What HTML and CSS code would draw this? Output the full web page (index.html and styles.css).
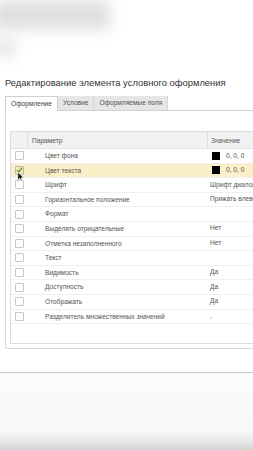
FILE: index.html
```html
<!DOCTYPE html>
<html lang="ru">
<head>
    <meta charset="UTF-8">
    <meta name="viewport" content="width=device-width, initial-scale=1.0">
    <title>Редактирование элемента условного оформления</title>
    <link rel="stylesheet" href="styles.css">
</head>
<body>
    <div class="page">
        <div class="topBlur">
            <div class="smudge"></div>
            <div class="smudgeSmall"></div>
        </div>

        <div class="title">Редактирование элемента условного оформления</div>

        <div class="tabs">
            <div class="tab active">Оформление</div>
            <div class="tab">Условие</div>
            <div class="tab">Оформляемые поля</div>
        </div>

        <div class="panel">
            <div class="grid">
                <div class="gridHead">
                    <div class="colCheck"></div>
                    <div class="colParam">Параметр</div>
                    <div class="colValue">Значение</div>
                </div>

                <div class="row">
                    <div class="colCheck"><span class="box"></span></div>
                    <div class="colParam indent">Цвет фона</div>
                    <div class="colValue"><span class="swatch"></span>0, 0, 0</div>
                </div>
                <div class="row current">
                    <div class="colCheck">
                        <span class="box checked">
                            <svg viewBox="0 0 10 10" width="8" height="8"><path d="M1.5 5.2 L4 7.6 L8.6 2" fill="none" stroke="#3a9a3a" stroke-width="1.8"/></svg>
                        </span>
                        <svg class="cursor" viewBox="0 0 10 14" width="8" height="12"><path d="M1 1 L1 11 L3.5 8.6 L5.3 12.6 L6.8 11.9 L5.1 8 L8.4 8 Z" fill="#111" stroke="#fff" stroke-width="0.8"/></svg>
                    </div>
                    <div class="colParam indent">Цвет текста</div>
                    <div class="colValue"><span class="swatch"></span>0, 0, 0</div>
                </div>
                <div class="row">
                    <div class="colCheck"><span class="box"></span></div>
                    <div class="colParam indent">Шрифт</div>
                    <div class="colValue">Шрифт диалогов</div>
                </div>
                <div class="row">
                    <div class="colCheck"><span class="box"></span></div>
                    <div class="colParam indent">Горизонтальное положение</div>
                    <div class="colValue">Прижать влево</div>
                </div>
                <div class="row">
                    <div class="colCheck"><span class="box"></span></div>
                    <div class="colParam indent">Формат</div>
                    <div class="colValue"></div>
                </div>
                <div class="row">
                    <div class="colCheck"><span class="box"></span></div>
                    <div class="colParam indent">Выделять отрицательные</div>
                    <div class="colValue">Нет</div>
                </div>
                <div class="row">
                    <div class="colCheck"><span class="box"></span></div>
                    <div class="colParam indent">Отметка незаполненного</div>
                    <div class="colValue">Нет</div>
                </div>
                <div class="row">
                    <div class="colCheck"><span class="box"></span></div>
                    <div class="colParam indent">Текст</div>
                    <div class="colValue"></div>
                </div>
                <div class="row">
                    <div class="colCheck"><span class="box"></span></div>
                    <div class="colParam indent">Видимость</div>
                    <div class="colValue">Да</div>
                </div>
                <div class="row">
                    <div class="colCheck"><span class="box"></span></div>
                    <div class="colParam indent">Доступность</div>
                    <div class="colValue">Да</div>
                </div>
                <div class="row">
                    <div class="colCheck"><span class="box"></span></div>
                    <div class="colParam indent">Отображать</div>
                    <div class="colValue">Да</div>
                </div>
                <div class="row">
                    <div class="colCheck"><span class="box"></span></div>
                    <div class="colParam indent">Разделитель множественных значений</div>
                    <div class="colValue">,</div>
                </div>
            </div>
        </div>

        <div class="bottomLine"></div>
        <div class="bottomArea"></div>
    </div>
</body>
</html>
```

FILE: styles.css
```css
body {
    margin: 0;
    background-color: #ffffff;
    font-family: 'Liberation Sans', Arial, sans-serif;
    color: #444;
}

.page {
    width: 253px;
    height: 450px;
    overflow: hidden;
    display: flex;
    flex-direction: column;
}

/* размытый фон сверху */
.topBlur {
    height: 76px;
    flex-shrink: 0;
    overflow: hidden;
}

.smudge {
    width: 118px;
    height: 30px;
    margin-left: -8px;
    background-color: #e0e0e0;
    filter: blur(7px);
}

.smudgeSmall {
    width: 22px;
    height: 22px;
    margin-top: 6px;
    margin-left: -6px;
    background-color: #ebebeb;
    filter: blur(6px);
}

.title {
    padding-left: 5px;
    font-size: 9.4px;
    line-height: 14px;
    height: 20px;
    color: #333;
    white-space: nowrap;
    flex-shrink: 0;
}

.tabs {
    display: flex;
    margin-left: 5px;
    width: 400px;
    height: 14px;
    border-bottom: 1px solid #d0d0d0;
    flex-shrink: 0;
}

.tab {
    font-size: 6.6px;
    line-height: 14px;
    padding: 0 5px;
    color: #555;
    background-color: #e6e6e6;
    border-right: 1px solid #d4d4d4;
    white-space: nowrap;
}

.tab.active {
    background-color: #ffffff;
    border: 1px solid #d0d0d0;
    border-bottom: none;
    margin-bottom: -1px;
    line-height: 13px;
    color: #444;
}

.panel {
    margin-left: 5px;
    width: 400px;
    height: 238px;
    border-left: 1px solid #dadada;
    border-bottom: 1px solid #dadada;
    padding: 20px 0 4px 4px;
    box-sizing: border-box;
    flex-shrink: 0;
}

.grid {
    height: 100%;
    border: 1px solid #dcdcdc;
    border-right: none;
    box-sizing: border-box;
}

.gridHead,
.row {
    display: flex;
    font-size: 6.6px;
    white-space: nowrap;
}

.gridHead {
    height: 17px;
    line-height: 17px;
    background-color: #f2f2f2;
    border-bottom: 1px solid #e0e0e0;
    box-sizing: border-box;
    color: #555;
}

.row {
    height: 14.6px;
    line-height: 14.6px;
    border-bottom: 1px solid #efefef;
    box-sizing: border-box;
    color: #555;
}

.row.current {
    background-color: #fbefc9;
}

.colCheck {
    width: 17px;
    flex-shrink: 0;
    display: flex;
    align-items: center;
    padding-left: 4px;
    box-sizing: border-box;
    position: relative;
}

.gridHead .colCheck {
    border-right: 1px solid #dedede;
}

.colParam {
    width: 179px;
    flex-shrink: 0;
    padding-left: 4px;
    box-sizing: border-box;
    overflow: hidden;
}

.colParam.indent {
    padding-left: 17px;
}

.gridHead .colValue {
    border-left: 1px solid #dedede;
}

.colValue {
    padding-left: 3px;
    display: flex;
    align-items: center;
    color: #555;
}

.box {
    width: 7px;
    height: 7px;
    border: 1px solid #c8c8c8;
    background-color: #fff;
    border-radius: 1px;
    display: flex;
    align-items: center;
    justify-content: center;
}

.box.checked {
    background-color: #f6e7a8;
    border-color: #b9b9b9;
}

.cursor {
    position: absolute;
    left: 6px;
    top: 7px;
}

.swatch {
    width: 8px;
    height: 8px;
    background-color: #000;
    margin: 0 6px 0 2px;
}

.bottomLine {
    margin-top: 23px;
    height: 1px;
    background-color: #c8c8c8;
    flex-shrink: 0;
}

.bottomArea {
    flex: 1;
    background: linear-gradient(to bottom, #fbfbfb 0%, #f8f8f8 75%, #e6e6e6 90%, #d4d4d4 100%);
}
```
